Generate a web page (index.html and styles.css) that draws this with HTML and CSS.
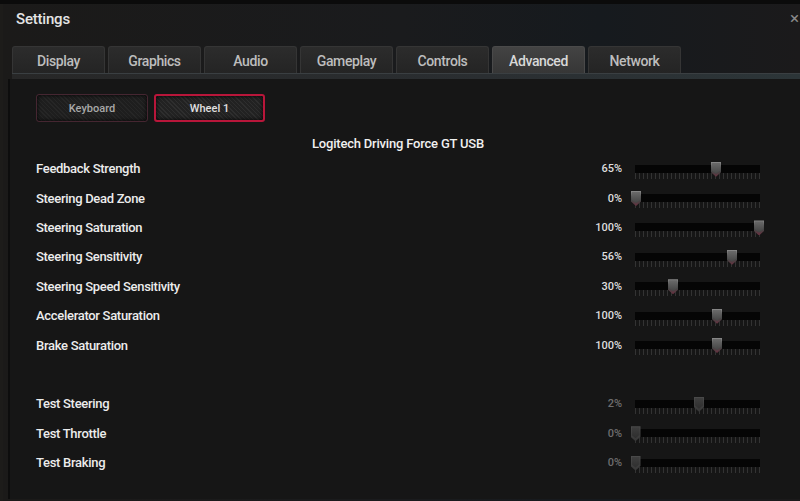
FILE: index.html
```html
<!DOCTYPE html>
<html>
<head>
    <title>Settings</title>
    <link rel="stylesheet" href="styles.css">
</head>
<body>
    <div class="window">
        <!-- Title bar -->
        <div class="titlebar">
            <h1>Settings</h1>
            <span class="close">&times;</span>
        </div>

        <!-- Tabs -->
        <nav class="tabs">
            <div class="tab">Display</div>
            <div class="tab">Graphics</div>
            <div class="tab">Audio</div>
            <div class="tab">Gameplay</div>
            <div class="tab">Controls</div>
            <div class="tab active">Advanced</div>
            <div class="tab">Network</div>
        </nav>
        <div class="tabline"></div>

        <!-- Advanced panel -->
        <div class="panel">
            <div class="devices">
                <div class="device">Keyboard</div>
                <div class="device on">Wheel 1</div>
            </div>

            <h2>Logitech Driving Force GT USB</h2>

            <div class="rows">
                <div class="row">
                    <span class="label">Feedback Strength</span>
                    <span class="value">65%</span>
                    <div class="slider"><div class="track"></div><div class="ticks"></div><div class="thumb" style="left: 64.8%"></div></div>
                </div>
                <div class="row">
                    <span class="label">Steering Dead Zone</span>
                    <span class="value">0%</span>
                    <div class="slider"><div class="track"></div><div class="ticks"></div><div class="thumb" style="left: 0.8%"></div></div>
                </div>
                <div class="row">
                    <span class="label">Steering Saturation</span>
                    <span class="value">100%</span>
                    <div class="slider"><div class="track"></div><div class="ticks"></div><div class="thumb" style="left: 99.2%"></div></div>
                </div>
                <div class="row">
                    <span class="label">Steering Sensitivity</span>
                    <span class="value">56%</span>
                    <div class="slider"><div class="track"></div><div class="ticks"></div><div class="thumb" style="left: 77.6%"></div></div>
                </div>
                <div class="row">
                    <span class="label">Steering Speed Sensitivity</span>
                    <span class="value">30%</span>
                    <div class="slider"><div class="track"></div><div class="ticks"></div><div class="thumb" style="left: 30.4%"></div></div>
                </div>
                <div class="row">
                    <span class="label">Accelerator Saturation</span>
                    <span class="value">100%</span>
                    <div class="slider"><div class="track"></div><div class="ticks"></div><div class="thumb" style="left: 65.6%"></div></div>
                </div>
                <div class="row">
                    <span class="label">Brake Saturation</span>
                    <span class="value">100%</span>
                    <div class="slider"><div class="track"></div><div class="ticks"></div><div class="thumb" style="left: 65.6%"></div></div>
                </div>

                <div class="spacer"></div>

                <div class="row test">
                    <span class="label">Test Steering</span>
                    <span class="value">2%</span>
                    <div class="slider"><div class="track"></div><div class="ticks"></div><div class="thumb" style="left: 51.2%"></div></div>
                </div>
                <div class="row test">
                    <span class="label">Test Throttle</span>
                    <span class="value">0%</span>
                    <div class="slider"><div class="track"></div><div class="ticks"></div><div class="thumb" style="left: 0.4%"></div></div>
                </div>
                <div class="row test">
                    <span class="label">Test Braking</span>
                    <span class="value">0%</span>
                    <div class="slider"><div class="track"></div><div class="ticks"></div><div class="thumb" style="left: 0.4%"></div></div>
                </div>
            </div>
        </div>
    </div>
</body>
</html>
```

FILE: styles.css
```css
/* Page base */
body {
    margin: 0;
    background-color: #0b0b0b;
    font-family: Roboto, "Liberation Sans", sans-serif;
    color: #e6e6e6;
    overflow: hidden;
}
/* Window frame */
.window {
    margin-top: 4px;
    height: 497px;
    background: linear-gradient(90deg, #1b1a19 0%, #1a1b1d 50%, #161a1e 75%, #1b1a1b 100%);
    border-left: 3px solid #1d1c1a;
}
/* Title bar */
.titlebar {
    height: 42px;
    display: flex;
    align-items: flex-start;
    justify-content: space-between;
}
.titlebar h1 {
    margin: 6px 0 0 13px;
    font-size: 15px;
    font-weight: 500;
    color: #e4e4e4;
    letter-spacing: -0.2px;
}
.close {
    margin-top: 4px;
    margin-right: 1px;
    font-size: 17px;
    line-height: 20px;
    color: #8a8a8a;
}
/* Tab strip */
.tabs {
    display: flex;
    gap: 3px;
    padding-left: 9px;
    height: 27px;
}
.tab {
    width: 93px;
    height: 27px;
    line-height: 28px;
    text-align: center;
    font-size: 14px;
    font-weight: 500;
    color: #bdbdbd;
    letter-spacing: -0.4px;
    background: linear-gradient(#2c2c2c, #242424);
    border: 1px solid #353535;
    border-bottom: none;
    border-radius: 3px 3px 0 0;
    box-sizing: border-box;
}
.tab.active {
    background: linear-gradient(#434343, #363636);
    border-color: #4a4a4a;
    color: #d8d8d8;
}
.tabline {
    height: 6px;
    margin-left: 9px;
    background: linear-gradient(90deg, #272727, #2a2e31 60%, #2c3538);
    border-top: 1px solid #3a3f42;
    box-sizing: border-box;
}
/* Content panel */
.panel {
    margin-left: 5px;
    height: 420px;
    background-color: #161616;
    border-left: 2px solid #0d0d0d;
    padding: 15px 0 0 26px;
    box-sizing: border-box;
}
/* Device selector buttons */
.devices {
    display: flex;
    gap: 6px;
}
.device {
    width: 112px;
    height: 28px;
    box-sizing: border-box;
    line-height: 27px;
    text-align: center;
    font-size: 11px;
    font-weight: 500;
    color: #a8a8a8;
    border: 1px solid #452631;
    border-radius: 3px;
    background: repeating-linear-gradient(45deg, #262626 0, #262626 1px, #1e1e1e 1px, #1e1e1e 3px);
    box-shadow: inset 0 0 4px #000;
}
.device.on {
    width: 111px;
    color: #e0e0e0;
    border: 2px solid #b8163a;
    line-height: 25px;
    background: repeating-linear-gradient(45deg, #2e2e2e 0, #2e2e2e 1px, #222 1px, #222 3px);
}
/* Device name heading */
.panel h2 {
    margin: 14px 0 0 0;
    padding-right: 40px;
    height: 18px;
    text-align: center;
    font-size: 13px;
    font-weight: 500;
    letter-spacing: -0.2px;
    color: #f0f0f0;
}
/* Setting rows */
.rows {
    width: 724px;
}
.row {
    height: 29.4px;
    display: flex;
    align-items: center;
}
.spacer {
    height: 29.4px;
}
.label {
    flex: 1;
    font-size: 13px;
    font-weight: 500;
    letter-spacing: -0.3px;
    color: #ececec;
}
.value {
    width: 60px;
    text-align: right;
    font-size: 11px;
    font-weight: 500;
    color: #dedede;
    margin-right: 13px;
}
/* Slider */
.slider {
    position: relative;
    width: 125px;
    height: 14px;
    margin-top: 6px;
}
.track {
    height: 8px;
    background-color: #050505;
}
.ticks {
    height: 6px;
    background: repeating-linear-gradient(90deg, #3a3a3a 0, #3a3a3a 1px, transparent 1px, transparent 4px);
    opacity: 0.8;
}
.thumb {
    position: absolute;
    top: -3px;
    width: 10px;
    height: 15px;
    transform: translateX(-50%);
    clip-path: polygon(0 0, 100% 0, 100% 70%, 50% 100%, 0 70%);
    background: linear-gradient(#8a8a8a, #5a5a5a 35%, #454545 65%, #6a3040);
}
.thumb::after {
    content: "";
    position: absolute;
    left: 1px;
    top: 1px;
    right: 1px;
    bottom: 3px;
    clip-path: polygon(0 0, 100% 0, 100% 70%, 50% 100%, 0 70%);
    background: linear-gradient(#6a6a6a, #444);
}
/* Test rows are read-only and dimmed */
.row.test .value {
    color: #6e6e6e;
}
.row.test .thumb {
    background: linear-gradient(#4a4a4a, #363636);
}
.row.test .thumb::after {
    background: linear-gradient(#3e3e3e, #2e2e2e);
}
```
